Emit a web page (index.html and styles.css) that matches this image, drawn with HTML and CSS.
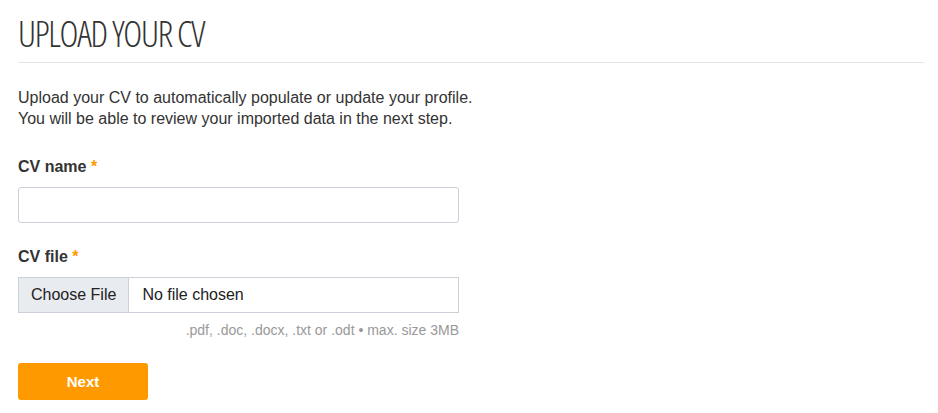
FILE: index.html
```html
<!DOCTYPE html>
<html lang="en">
  <head>
    <meta charset="UTF-8" />
    <meta name="viewport" content="width=device-width, initial-scale=1.0" />
    <title>Upload your CV</title>
    <link rel="stylesheet" href="styles.css">
  </head>
  <body>
    <div class="page">
      <h1 class="title">Upload your CV</h1>
      <p class="intro">
        Upload your CV to automatically populate or update your profile.<br />
        You will be able to review your imported data in the next step.
      </p>
      <form class="cv-form">
        <div class="field">
          <label class="field-label" for="cv-name">CV name <span class="req">*</span></label>
          <input class="text-input" id="cv-name" type="text" />
        </div>
        <div class="field">
          <label class="field-label" for="cv-file">CV file <span class="req">*</span></label>
          <div class="file-input">
            <span class="file-btn">Choose File</span>
            <span class="file-name">No file chosen</span>
          </div>
          <div class="hint">.pdf, .doc, .docx, .txt or .odt • max. size 3MB</div>
        </div>
        <button class="btn-next" type="button">Next</button>
      </form>
    </div>
  </body>
</html>
```

FILE: styles.css
```css
* {
  margin: 0;
  padding: 0;
  box-sizing: border-box;
}
body {
  background: #fff;
  font-family: "Liberation Sans", Arial, sans-serif;
  color: #333;
}
.page {
  padding: 14px 14px 0 18px;
}
.title {
  font-family: "Open Sans", sans-serif;
  font-weight: 300;
  font-stretch: 75%;
  font-size: 36px;
  line-height: 40px;
  letter-spacing: -1.3px;
  text-transform: uppercase;
  color: #333;
  padding-bottom: 8px;
  border-bottom: 1px solid #e5e5e5;
}
.intro {
  margin-top: 24px;
  font-size: 16px;
  line-height: 21px;
}
.field {
  margin-top: 28px;
}
.field + .field {
  margin-top: 24px;
}
.field-label {
  display: block;
  font-weight: bold;
  font-size: 16px;
  line-height: 20px;
  margin-bottom: 10px;
}
.req {
  color: #f90;
}
.text-input {
  display: block;
  width: 441px;
  height: 36px;
  border: 1px solid #ccd0d8;
  border-radius: 3px;
  font-size: 16px;
  padding: 0 10px;
}
.file-input {
  display: flex;
  width: 441px;
  height: 36px;
  border: 1px solid #ccd0d8;
  font-size: 16px;
  color: #222;
}
.file-btn {
  display: flex;
  align-items: center;
  padding: 0 12px;
  background: #e8ebf0;
  border-right: 1px solid #ccd0d8;
}
.file-name {
  display: flex;
  align-items: center;
  padding-left: 13px;
}
.hint {
  width: 441px;
  text-align: right;
  font-size: 14px;
  color: #999;
  margin-top: 9px;
}
.btn-next {
  display: block;
  margin-top: 25px;
  width: 130px;
  height: 37px;
  border: none;
  border-radius: 3px;
  background: #f90;
  color: #fff;
  font-family: "Liberation Sans", Arial, sans-serif;
  font-weight: bold;
  font-size: 15px;
}
```
